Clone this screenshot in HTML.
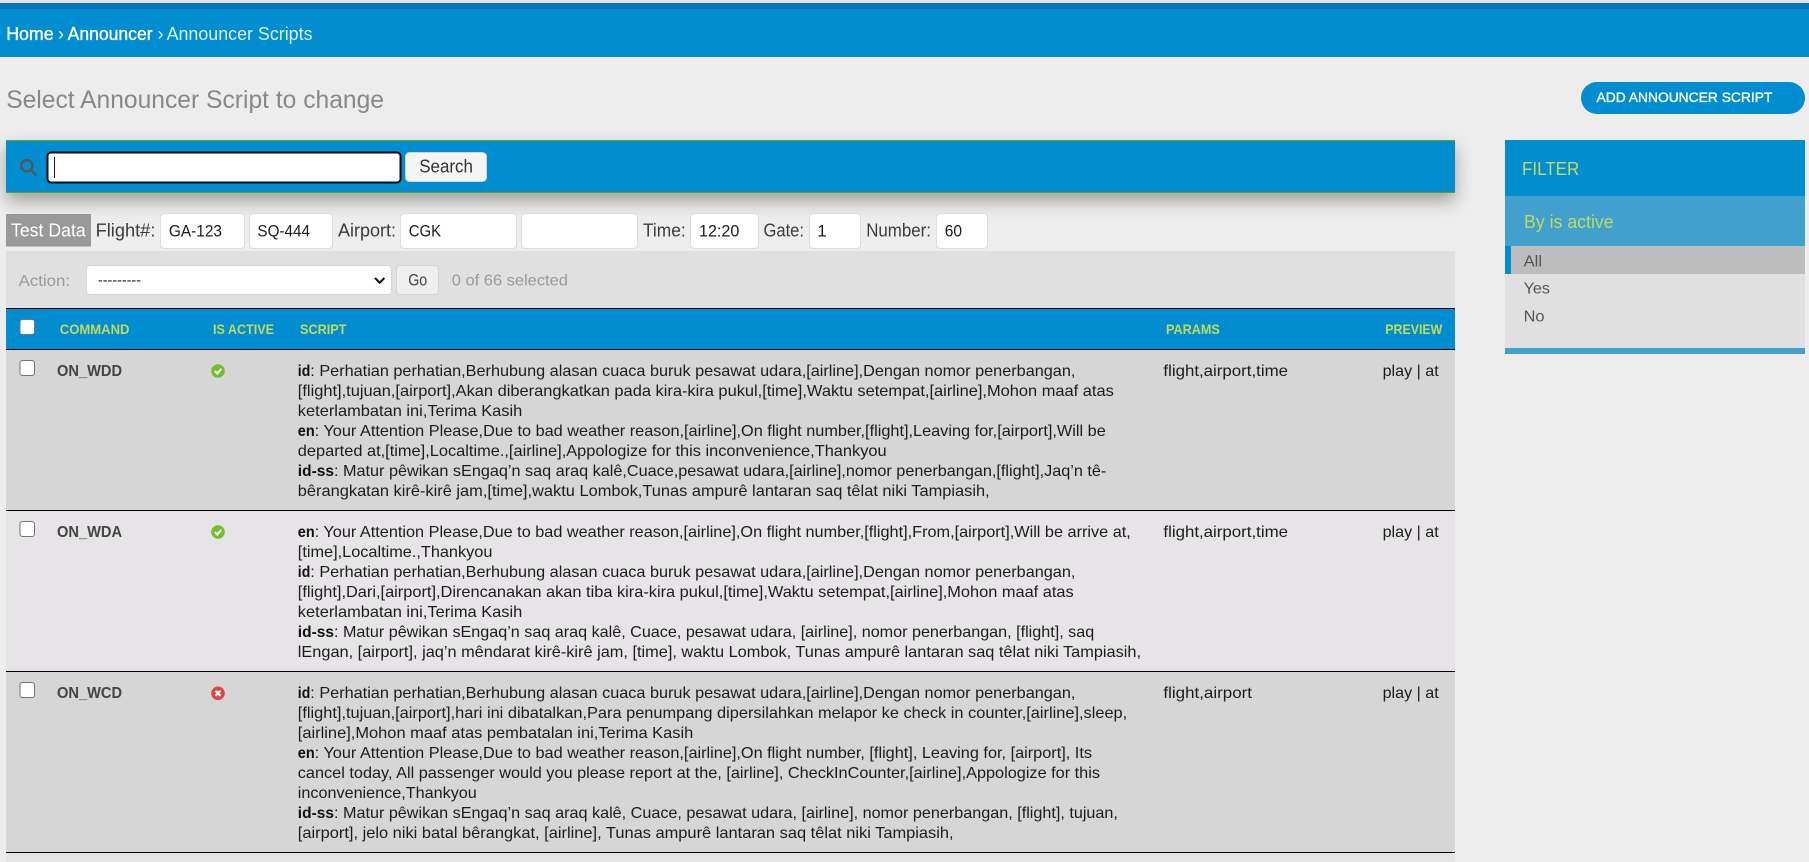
<!DOCTYPE html>
<html lang="en">
<head>
<meta charset="utf-8">
<title>Select Announcer Script to change</title>
<style>
html,body{margin:0;padding:0;width:1809px;height:862px;overflow:hidden;background:#ededed}
.b{position:absolute}
svg{position:absolute;left:0;top:0}
text{font-family:"Liberation Sans",Arial,sans-serif;font-size:16px;fill:#222}
.hd{font-size:14px;font-weight:bold;fill:#c1db5c}
.lab{font-weight:bold;fill:#111}
.sc{fill:#1c1c1c}
.cmd{font-weight:bold;fill:#444}
.lbl{font-size:18px;fill:#3c3c3c}
.val{font-size:17px;fill:#1c1c1c}
.mut{fill:#999}
.lim{font-size:18px;fill:#c1db5c}
.flt{fill:#555}
.med{stroke:#fff;stroke-width:.35px}
</style>
</head>
<body>
<div class="b" style="left:0;top:0;width:1809px;height:3px;background:#e4e4e4"></div>
<div class="b" style="left:0;top:3px;width:1809px;height:6px;background:#0075ba"></div>
<div class="b" style="left:0;top:9px;width:1809px;height:48px;background:#028dd0"></div>

<div class="b" style="left:6px;top:140px;width:1449px;height:53px;background:#028dd0;border-top:1px solid #4ea82e;border-bottom:1px solid #4ea82e;box-sizing:border-box;box-shadow:0 8px 16px rgba(0,0,0,.32)"></div>

<div class="b" style="left:6px;top:251px;width:1449px;height:57px;background:#e0e0e0"></div>
<div class="b" style="left:6px;top:308px;width:1449px;height:42px;background:#028dd0;border-top:1px solid #000;border-bottom:1px solid #000;box-sizing:border-box"></div>
<div class="b" style="left:6px;top:350px;width:1449px;height:161px;background:#d6d6d6;border-bottom:1px solid #000;box-sizing:border-box"></div>
<div class="b" style="left:6px;top:511px;width:1449px;height:161px;background:#e6e4e6;border-bottom:1px solid #000;box-sizing:border-box"></div>
<div class="b" style="left:6px;top:672px;width:1449px;height:181px;background:#d6d6d6;border-bottom:1px solid #000;box-sizing:border-box"></div>
<div class="b" style="left:6px;top:853px;width:1449px;height:9px;background:#e6e4e6"></div>

<div class="b" style="left:1505px;top:140px;width:300px;height:56px;background:#028dd0"></div>
<div class="b" style="left:1505px;top:196px;width:300px;height:50px;background:#42a0cf"></div>
<div class="b" style="left:1505px;top:246px;width:300px;height:102px;background:#e0e0e0"></div>
<div class="b" style="left:1505px;top:246px;width:300px;height:28px;background:#bdbdbd"></div>
<div class="b" style="left:1505px;top:246px;width:6px;height:28px;background:#028dd0"></div>
<div class="b" style="left:1505px;top:348px;width:300px;height:6px;background:#42a0cf"></div>

<div class="b" style="left:1581px;top:82px;width:224px;height:32px;border-radius:16px;background:#028dd0"></div>

<svg width="1809" height="862" viewBox="0 0 1809 862" xmlns="http://www.w3.org/2000/svg">
<!-- breadcrumb -->
<text class="med" x="6.2" y="40" style="font-size:18px;fill:#fff" textLength="47.4" lengthAdjust="spacingAndGlyphs">Home</text>
<text x="58" y="40" style="font-size:18px;fill:#e8f4fa">›</text>
<text class="med" x="67.6" y="40" style="font-size:18px;fill:#fff" textLength="85" lengthAdjust="spacingAndGlyphs">Announcer</text>
<text x="157.5" y="40" style="font-size:18px;fill:#dceef8">›</text>
<text x="166.6" y="40" style="font-size:18px;fill:#dceef8" textLength="145.9" lengthAdjust="spacingAndGlyphs">Announcer Scripts</text>

<!-- title -->
<text x="6.2" y="108" style="font-size:25px;fill:#888" textLength="377.8" lengthAdjust="spacingAndGlyphs">Select Announcer Script to change</text>

<!-- add button -->
<text class="med" x="1596.5" y="102" style="font-size:14px;fill:#fff" textLength="175.9" lengthAdjust="spacingAndGlyphs">ADD ANNOUNCER SCRIPT</text>

<!-- search -->
<circle cx="26.8" cy="165.8" r="5.6" fill="none" stroke="#555" stroke-width="2.3"/>
<path d="M31 170 L35.4 174.6" fill="none" stroke="#555" stroke-width="2.6" stroke-linecap="round"/>
<rect x="47.5" y="152.5" width="353" height="30" rx="3.5" fill="#fff" stroke="#0b0b0b" stroke-width="2"/>
<rect x="54" y="157" width="1" height="21" fill="#111"/>
<rect x="405.5" y="152.5" width="81" height="29" rx="4" fill="#f5f5f5" stroke="#d4d4d4"/>
<text x="419.2" y="172.6" style="font-size:18px;fill:#333" textLength="53.8" lengthAdjust="spacingAndGlyphs">Search</text>

<!-- test data row -->
<rect x="6" y="214" width="85" height="32.5" fill="#999"/>
<text x="11" y="236.4" style="font-size:18px;fill:#fff" textLength="74.7" lengthAdjust="spacingAndGlyphs">Test Data</text>
<text class="lbl" x="95.6" y="236.4" textLength="59.8" lengthAdjust="spacingAndGlyphs">Flight#:</text>
<rect x="160.5" y="213.5" width="84" height="35" rx="4" fill="#fff" stroke="#dcdcdc"/>
<text class="val" x="168.9" y="236.4" textLength="53.1" lengthAdjust="spacingAndGlyphs">GA-123</text>
<rect x="249.5" y="213.5" width="83" height="35" rx="4" fill="#fff" stroke="#dcdcdc"/>
<text class="val" x="257.4" y="236.4" textLength="52.6" lengthAdjust="spacingAndGlyphs">SQ-444</text>
<text class="lbl" x="338" y="236.4" textLength="58" lengthAdjust="spacingAndGlyphs">Airport:</text>
<rect x="400.5" y="213.5" width="116" height="35" rx="4" fill="#fff" stroke="#dcdcdc"/>
<text class="val" x="408.8" y="236.4" textLength="32.2" lengthAdjust="spacingAndGlyphs">CGK</text>
<rect x="521.5" y="213.5" width="116" height="35" rx="4" fill="#fff" stroke="#dcdcdc"/>
<text class="lbl" x="642.9" y="236.4" textLength="42.8" lengthAdjust="spacingAndGlyphs">Time:</text>
<rect x="690.5" y="213.5" width="68" height="35" rx="4" fill="#fff" stroke="#dcdcdc"/>
<text class="val" x="699" y="236.4" textLength="40.3" lengthAdjust="spacingAndGlyphs">12:20</text>
<text class="lbl" x="763.5" y="236.4" textLength="40.5" lengthAdjust="spacingAndGlyphs">Gate:</text>
<rect x="809.5" y="213.5" width="51" height="35" rx="4" fill="#fff" stroke="#dcdcdc"/>
<text class="val" x="817.2" y="236.4">1</text>
<text class="lbl" x="866.2" y="236.4" textLength="64.8" lengthAdjust="spacingAndGlyphs">Number:</text>
<rect x="936.5" y="213.5" width="51" height="35" rx="4" fill="#fff" stroke="#dcdcdc"/>
<text class="val" x="944.7" y="236.4" textLength="17.3" lengthAdjust="spacingAndGlyphs">60</text>

<!-- action bar -->
<text class="mut" x="18.7" y="286" textLength="51.3" lengthAdjust="spacingAndGlyphs">Action:</text>
<rect x="86.5" y="265.5" width="305" height="29" rx="4" fill="#fff" stroke="#d4d4d4"/>
<text x="98" y="285" style="font-size:15px;fill:#222" textLength="43" lengthAdjust="spacingAndGlyphs">---------</text>
<path d="M375 278 L379.7 282.7 L384.4 278" fill="none" stroke="#111" stroke-width="2"/>
<rect x="396.5" y="265.5" width="42" height="29" rx="4" fill="#efefef" stroke="#d4d4d4"/>
<text x="408.2" y="285.7" style="font-size:17px;fill:#444" textLength="19" lengthAdjust="spacingAndGlyphs">Go</text>
<text class="mut" x="451.8" y="285.3" textLength="116.1" lengthAdjust="spacingAndGlyphs">0 of 66 selected</text>

<!-- header -->
<rect x="20" y="319.5" width="14.5" height="15" rx="2.5" fill="#fff" stroke="#767676"/>
<text class="hd" x="59.8" y="334" textLength="69.7" lengthAdjust="spacingAndGlyphs">COMMAND</text>
<text class="hd" x="213" y="334" textLength="61" lengthAdjust="spacingAndGlyphs">IS ACTIVE</text>
<text class="hd" x="300" y="334" textLength="46.4" lengthAdjust="spacingAndGlyphs">SCRIPT</text>
<text class="hd" x="1166" y="334" textLength="53.8" lengthAdjust="spacingAndGlyphs">PARAMS</text>
<text class="hd" x="1385.3" y="334" textLength="57" lengthAdjust="spacingAndGlyphs">PREVIEW</text>

<!-- row 1 -->
<rect x="20" y="360.5" width="14.5" height="15" rx="2.5" fill="#fff" stroke="#767676"/>
<text class="cmd" x="57" y="376" textLength="65" lengthAdjust="spacingAndGlyphs">ON_WDD</text>
<circle cx="218" cy="371" r="6.8" fill="#70bf2b"/>
<path d="M214.8 371 L217.2 373.5 L221.3 368.9" fill="none" stroke="#fff" stroke-width="2"/>
<text class="lab" x="297.8" y="376" textLength="12.5" lengthAdjust="spacingAndGlyphs">id</text>
<text class="sc" x="310.3" y="376" textLength="765.1" lengthAdjust="spacingAndGlyphs">: Perhatian perhatian,Berhubung alasan cuaca buruk pesawat udara,[airline],Dengan nomor penerbangan,</text>
<text class="sc" x="297.8" y="396" textLength="816" lengthAdjust="spacingAndGlyphs">[flight],tujuan,[airport],Akan diberangkatkan pada kira-kira pukul,[time],Waktu setempat,[airline],Mohon maaf atas</text>
<text class="sc" x="297.8" y="416" textLength="224.5" lengthAdjust="spacingAndGlyphs">keterlambatan ini,Terima Kasih</text>
<text class="lab" x="297.8" y="436" textLength="16.9" lengthAdjust="spacingAndGlyphs">en</text>
<text class="sc" x="314.7" y="436" textLength="791.1" lengthAdjust="spacingAndGlyphs">: Your Attention Please,Due to bad weather reason,[airline],On flight number,[flight],Leaving for,[airport],Will be</text>
<text class="sc" x="297.8" y="456" textLength="588.8" lengthAdjust="spacingAndGlyphs">departed at,[time],Localtime.,[airline],Appologize for this inconvenience,Thankyou</text>
<text class="lab" x="297.8" y="476" textLength="36.2" lengthAdjust="spacingAndGlyphs">id-ss</text>
<text class="sc" x="334" y="476" textLength="772.3" lengthAdjust="spacingAndGlyphs">: Matur pêwikan sEngaq’n saq araq kalê,Cuace,pesawat udara,[airline],nomor penerbangan,[flight],Jaq’n tê-</text>
<text class="sc" x="297.8" y="496" textLength="691.9" lengthAdjust="spacingAndGlyphs">bêrangkatan kirê-kirê jam,[time],waktu Lombok,Tunas ampurê lantaran saq têlat niki Tampiasih,</text>
<text class="sc" x="1163.4" y="376" textLength="124.6" lengthAdjust="spacingAndGlyphs">flight,airport,time</text>
<text class="sc" x="1382.6" y="376" textLength="56.1" lengthAdjust="spacingAndGlyphs">play | at</text>

<!-- row 2 -->
<rect x="20" y="521.5" width="14.5" height="15" rx="2.5" fill="#fff" stroke="#767676"/>
<text class="cmd" x="57" y="537" textLength="65" lengthAdjust="spacingAndGlyphs">ON_WDA</text>
<circle cx="218" cy="532" r="6.8" fill="#70bf2b"/>
<path d="M214.8 532 L217.2 534.5 L221.3 529.9" fill="none" stroke="#fff" stroke-width="2"/>
<text class="lab" x="297.8" y="537" textLength="16.9" lengthAdjust="spacingAndGlyphs">en</text>
<text class="sc" x="314.7" y="537" textLength="816.1" lengthAdjust="spacingAndGlyphs">: Your Attention Please,Due to bad weather reason,[airline],On flight number,[flight],From,[airport],Will be arrive at,</text>
<text class="sc" x="297.8" y="557" textLength="194.6" lengthAdjust="spacingAndGlyphs">[time],Localtime.,Thankyou</text>
<text class="lab" x="297.8" y="577" textLength="12.5" lengthAdjust="spacingAndGlyphs">id</text>
<text class="sc" x="310.3" y="577" textLength="765.1" lengthAdjust="spacingAndGlyphs">: Perhatian perhatian,Berhubung alasan cuaca buruk pesawat udara,[airline],Dengan nomor penerbangan,</text>
<text class="sc" x="297.8" y="597" textLength="775.9" lengthAdjust="spacingAndGlyphs">[flight],Dari,[airport],Direncanakan akan tiba kira-kira pukul,[time],Waktu setempat,[airline],Mohon maaf atas</text>
<text class="sc" x="297.8" y="617" textLength="224.5" lengthAdjust="spacingAndGlyphs">keterlambatan ini,Terima Kasih</text>
<text class="lab" x="297.8" y="637" textLength="36.2" lengthAdjust="spacingAndGlyphs">id-ss</text>
<text class="sc" x="334" y="637" textLength="760.2" lengthAdjust="spacingAndGlyphs">: Matur pêwikan sEngaq’n saq araq kalê, Cuace, pesawat udara, [airline], nomor penerbangan, [flight], saq</text>
<text class="sc" x="297.8" y="657" textLength="843.2" lengthAdjust="spacingAndGlyphs">lEngan, [airport], jaq’n mêndarat kirê-kirê jam, [time], waktu Lombok, Tunas ampurê lantaran saq têlat niki Tampiasih,</text>
<text class="sc" x="1163.4" y="537" textLength="124.6" lengthAdjust="spacingAndGlyphs">flight,airport,time</text>
<text class="sc" x="1382.6" y="537" textLength="56.1" lengthAdjust="spacingAndGlyphs">play | at</text>

<!-- row 3 -->
<rect x="20" y="682.5" width="14.5" height="15" rx="2.5" fill="#fff" stroke="#767676"/>
<text class="cmd" x="57" y="698" textLength="65" lengthAdjust="spacingAndGlyphs">ON_WCD</text>
<circle cx="218" cy="693.3" r="6.8" fill="#dd4646"/>
<path d="M215.6 690.9 L220.4 695.7 M220.4 690.9 L215.6 695.7" fill="none" stroke="#fff" stroke-width="2.2"/>
<text class="lab" x="297.8" y="698" textLength="12.5" lengthAdjust="spacingAndGlyphs">id</text>
<text class="sc" x="310.3" y="698" textLength="765.1" lengthAdjust="spacingAndGlyphs">: Perhatian perhatian,Berhubung alasan cuaca buruk pesawat udara,[airline],Dengan nomor penerbangan,</text>
<text class="sc" x="297.8" y="718" textLength="829.4" lengthAdjust="spacingAndGlyphs">[flight],tujuan,[airport],hari ini dibatalkan,Para penumpang dipersilahkan melapor ke check in counter,[airline],sleep,</text>
<text class="sc" x="297.8" y="738" textLength="395.5" lengthAdjust="spacingAndGlyphs">[airline],Mohon maaf atas pembatalan ini,Terima Kasih</text>
<text class="lab" x="297.8" y="758" textLength="16.9" lengthAdjust="spacingAndGlyphs">en</text>
<text class="sc" x="314.7" y="758" textLength="777.3" lengthAdjust="spacingAndGlyphs">: Your Attention Please,Due to bad weather reason,[airline],On flight number, [flight], Leaving for, [airport], Its</text>
<text class="sc" x="297.8" y="778" textLength="802.2" lengthAdjust="spacingAndGlyphs">cancel today, All passenger would you please report at the, [airline], CheckInCounter,[airline],Appologize for this</text>
<text class="sc" x="297.8" y="798" textLength="179" lengthAdjust="spacingAndGlyphs">inconvenience,Thankyou</text>
<text class="lab" x="297.8" y="818" textLength="36.2" lengthAdjust="spacingAndGlyphs">id-ss</text>
<text class="sc" x="334" y="818" textLength="783.9" lengthAdjust="spacingAndGlyphs">: Matur pêwikan sEngaq’n saq araq kalê, Cuace, pesawat udara, [airline], nomor penerbangan, [flight], tujuan,</text>
<text class="sc" x="297.8" y="838" textLength="655.8" lengthAdjust="spacingAndGlyphs">[airport], jelo niki batal bêrangkat, [airline], Tunas ampurê lantaran saq têlat niki Tampiasih,</text>
<text class="sc" x="1163.4" y="698" textLength="88.6" lengthAdjust="spacingAndGlyphs">flight,airport</text>
<text class="sc" x="1382.6" y="698" textLength="56.1" lengthAdjust="spacingAndGlyphs">play | at</text>

<!-- filter -->
<text class="lim" x="1522" y="175" textLength="57.3" lengthAdjust="spacingAndGlyphs">FILTER</text>
<text class="lim" x="1524" y="228" textLength="89.6" lengthAdjust="spacingAndGlyphs">By is active</text>
<text class="flt" x="1523.6" y="266.5" textLength="18.4" lengthAdjust="spacingAndGlyphs">All</text>
<text class="flt" x="1523.6" y="293.5" textLength="26.4" lengthAdjust="spacingAndGlyphs">Yes</text>
<text class="flt" x="1523.6" y="321.5" textLength="20.9" lengthAdjust="spacingAndGlyphs">No</text>
</svg>
</body>
</html>
